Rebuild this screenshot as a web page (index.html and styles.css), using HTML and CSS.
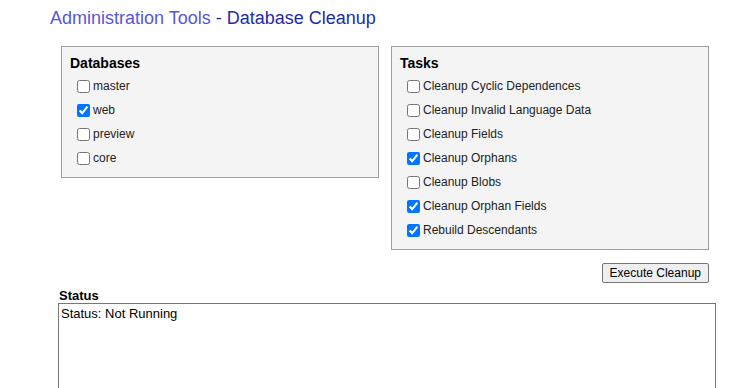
FILE: index.html
```html
<!DOCTYPE html>
<html lang="en">
<head>
  <meta charset="UTF-8" />
  <title>Administration Tools - Database Cleanup</title>
  <link rel="stylesheet" href="styles.css">
</head>
<body>

<h1 class="page-title"><a href="#" class="crumb">Administration Tools</a> - Database Cleanup</h1>

<div class="content">
  <div class="panels">
    <div class="panel">
      <h2>Databases</h2>
      <label class="item"><input type="checkbox">master</label>
      <label class="item"><input type="checkbox" checked>web</label>
      <label class="item"><input type="checkbox">preview</label>
      <label class="item"><input type="checkbox">core</label>
    </div>
    <div class="panel">
      <h2>Tasks</h2>
      <label class="item"><input type="checkbox">Cleanup Cyclic Dependences</label>
      <label class="item"><input type="checkbox">Cleanup Invalid Language Data</label>
      <label class="item"><input type="checkbox">Cleanup Fields</label>
      <label class="item"><input type="checkbox" checked>Cleanup Orphans</label>
      <label class="item"><input type="checkbox">Cleanup Blobs</label>
      <label class="item"><input type="checkbox" checked>Cleanup Orphan Fields</label>
      <label class="item"><input type="checkbox" checked>Rebuild Descendants</label>
    </div>
  </div>

  <div class="actions">
    <button>Execute Cleanup</button>
  </div>

  <div class="status-label">Status</div>
  <textarea class="status">Status: Not Running</textarea>
</div>

</body>
</html>
```

FILE: styles.css
```css
body {
  margin: 0;
  padding: 8px 0 0 50px;
  font-family: 'Liberation Sans', Arial, sans-serif;
  color: #000;
  background: #fff;
}

.page-title {
  margin: 0;
  font-size: 18px;
  font-weight: normal;
  color: #1c2ca8;
}

.crumb {
  color: #5656dc;
  text-decoration: none;
}

.content {
  margin-left: 8px;
  width: 658px;
}

.panels {
  display: flex;
  align-items: flex-start;
  gap: 12px;
  margin: 17px 0 0 3px;
}

.panel {
  width: 300px;
  padding: 8px 8px 7px;
  border: 1px solid #a0a0a0;
  background: #f4f4f4;
}

.panel h2 {
  margin: 0 0 3px;
  font-size: 14px;
  line-height: 16px;
}

.item {
  display: flex;
  align-items: center;
  height: 24px;
  padding-left: 3px;
  font-size: 12px;
  color: #222;
}

.item input {
  margin: 0 3px 0 4px;
  width: 13px;
  height: 13px;
}

.actions {
  display: flex;
  justify-content: flex-end;
  margin: 13px 7px 0 0;
}

.actions button {
  height: 20px;
  padding: 0 7px;
  font-family: 'Liberation Sans', Arial, sans-serif;
  font-size: 12px;
  border: 1px solid #767676;
  border-radius: 2px;
  background: #efefef;
}

.status-label {
  margin: 5px 0 0 1px;
  font-size: 13px;
  font-weight: bold;
  line-height: 15px;
}

.status {
  display: block;
  box-sizing: border-box;
  width: 658px;
  height: 100px;
  margin: 0;
  padding: 2px 2px;
  border: 1px solid #767676;
  font-family: 'Liberation Sans', Arial, sans-serif;
  font-size: 13px;
  resize: none;
}
```
